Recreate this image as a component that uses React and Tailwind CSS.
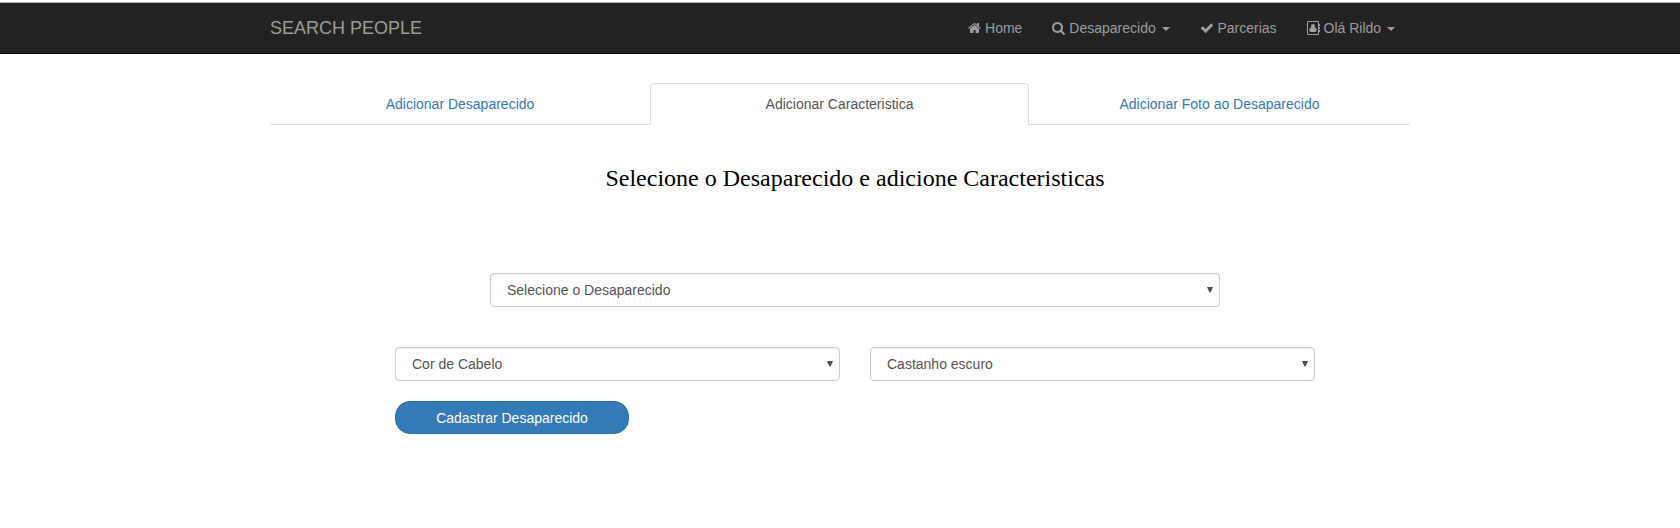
import React from "react";

const ICONS = {
  home: {
    box: "64 0 1664 1792",
    size: "w-[13px]",
    d: "M1472 992v480q0 26-19 45t-45 19h-384v-384h-256v384h-384q-26 0-45-19t-19-45v-480q0-1 .5-3t.5-3l575-474 575 474q1 2 1 6zm223-69l-62 74q-8 9-21 11h-3q-13 0-21-7l-692-577-692 577q-12 8-24 7-13-2-21-11l-62-74q-8-10-7-23.5t11-21.5l719-599q32-26 76-26t76 26l244 204v-195q0-14 9-23t23-9h192q14 0 23 9t9 23v408l219 182q10 8 11 21.5t-7 23.5z",
  },
  search: {
    box: "64 0 1664 1792",
    size: "w-[13px]",
    d: "M1216 832q0-185-131.5-316.5t-316.5-131.5-316.5 131.5-131.5 316.5 131.5 316.5 316.5 131.5 316.5-131.5 131.5-316.5zm512 832q0 52-38 90t-90 38q-54 0-90-38l-343-342q-179 124-399 124-143 0-273.5-55.5t-225-150-150-225-55.5-273.5 55.5-273.5 150-225 225-150 273.5-55.5 273.5 55.5 225 150 150 225 55.5 273.5q0 220-124 399l343 343q37 37 37 90z",
  },
  check: {
    box: "0 0 1792 1792",
    size: "w-[14px]",
    d: "M1671 566q0 40-28 68l-724 724-136 136q-28 28-68 28t-68-28l-136-136-362-362q-28-28-28-68t28-68l136-136q28-28 68-28t68 28l294 295 656-657q28-28 68-28t68 28l136 136q28 28 28 68z",
  },
  book: {
    box: "0 0 13 14",
    size: "w-[13px]",
    d: "M1.200 0H10.800Q12 0 12 1.200V3H12.800Q13 3 13 3.200V4.800Q13 5 12.800 5H12V6H12.800Q13 6 13 6.200V7.800Q13 8 12.800 8H12V9H12.800Q13 9 13 9.200V10.800Q13 11 12.800 11H12V12.800Q12 14 10.800 14H1.200Q0 14 0 12.800V1.200Q0 0 1.200 0ZM1 1.200V12.800Q1 13 1.200 13H10.800Q11 13 11 12.800V1.200Q11 1 10.800 1H1.200Q1 1 1 1.200ZM6 3Q8 3 8 5Q8 6 7.500 6.600Q9.600 6.600 9.600 9.300Q9.600 11 8.200 11H3.800Q2.400 11 2.400 9.300Q2.400 6.600 4.500 6.600Q4 6 4 5Q4 3 6 3Z",
  },
};

function Icon({ name }) {
  const icon = ICONS[name];
  return (
    <svg viewBox={icon.box} className={`h-[14px] shrink-0 fill-current ${icon.size}`} aria-hidden="true">
      <path fillRule={name === "book" ? "evenodd" : "nonzero"} d={icon.d} />
    </svg>
  );
}

function NavItem({ icon, label, menu }) {
  return (
    <a href="#" className="flex items-center px-[15px] leading-5">
      <Icon name={icon} />
      <span className="ml-[3.9px]">{label}</span>
      {menu && (
        <span className="mt-px ml-[5.9px] border-x-4 border-t-4 border-x-transparent border-t-[#9d9d9d]" />
      )}
    </a>
  );
}

function SelectBox({ label, className }) {
  return (
    <button
      type="button"
      className={`flex h-[34px] items-center justify-between rounded border border-[#ccc] bg-white pr-[6px] pl-4 text-[#555] shadow-[inset_0_1px_1px_rgba(0,0,0,0.075)] ${className}`}
    >
      <span>{label}</span>
      <svg viewBox="0 0 6 6" className="h-[6px] w-[6px] fill-[#4c4c4c]" aria-hidden="true">
        <path d="M0 0h6L3.500 5.500H2.500z" />
      </svg>
    </button>
  );
}

export default function App() {
  return (
    <div className="h-[528px] overflow-hidden bg-white pt-[2px] font-['Liberation_Sans',Arial,sans-serif] text-sm leading-5">
      <nav className="h-[52px] border-t border-b border-t-[#b5b5b5] border-b-[#080808] bg-[#222] text-[#9d9d9d]">
        <div className="mx-auto flex h-[50px] w-[1140px] items-center justify-between">
          <a href="#" className="text-lg leading-5">SEARCH PEOPLE</a>
          <div className="flex">
            <NavItem icon="home" label="Home" />
            <NavItem icon="search" label="Desaparecido" menu />
            <NavItem icon="check" label="Parcerias" />
            <NavItem icon="book" label="Olá Rildo" menu />
          </div>
        </div>
      </nav>

      <div className="mx-auto mt-[29px] flex h-[42px] w-[1140px] text-center text-[#337ab7]">
        <a href="#" className="w-[380px] border-b border-[#ddd] pt-[11px]">Adicionar Desaparecido</a>
        <a href="#" className="w-[379px] rounded-t border border-b-0 border-[#ddd] pt-[10px] text-[#555]">
          Adicionar Caracteristica
        </a>
        <a href="#" className="w-[381px] border-b border-[#ddd] pt-[11px]">Adicionar Foto ao Desaparecido</a>
      </div>

      <main className="ml-[395px] w-[920px]">
        <h1 className="pt-[40px] text-center font-['Liberation_Serif','Times_New_Roman',serif] text-2xl leading-[27px] text-black">
          Selecione o Desaparecido e adicione Caracteristicas
        </h1>
        <SelectBox label="Selecione o Desaparecido" className="mx-auto mt-[81px] w-[730px]" />
        <div className="mt-10 grid grid-cols-2 gap-[30px]">
          <SelectBox label="Cor de Cabelo" className="w-full" />
          <SelectBox label="Castanho escuro" className="w-full" />
        </div>
        <button
          type="button"
          className="mt-5 block h-[33px] w-[234px] rounded-[15px] border border-[#2e6da4] bg-[#337ab7] text-center text-white"
        >
          Cadastrar Desaparecido
        </button>
      </main>
    </div>
  );
}
